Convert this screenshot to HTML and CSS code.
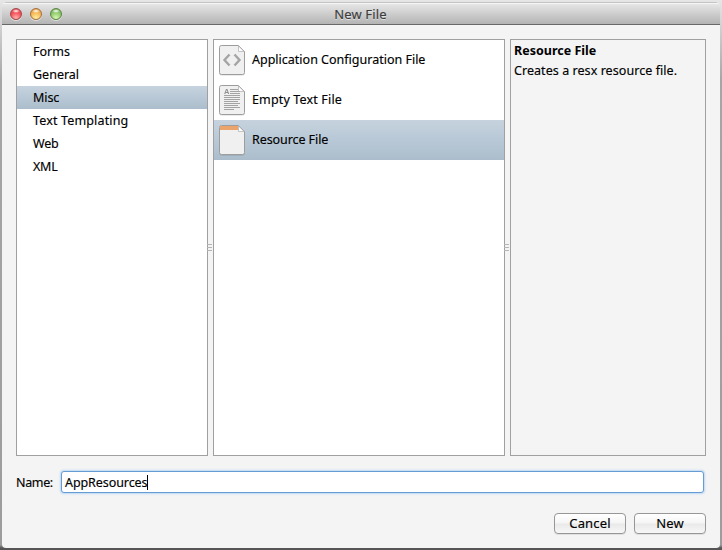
FILE: index.html
```
<!DOCTYPE html>
<html lang="en">
<head>
<meta charset="utf-8">
<title>New File</title>
<link rel="stylesheet" href="styles.css">
</head>
<body>
<div class="window">
  <header class="titlebar">
    <div class="lights"><i class="light red"></i><i class="light amber"></i><i class="light green"></i></div>
    <h1 class="title">New File</h1>
  </header>
  <main class="content">
    <div class="panels">
      <ul class="panel categories">
        <li>Forms</li>
        <li>General</li>
        <li class="selected snug">Misc</li>
        <li class="loose">Text Templating</li>
        <li class="tight">Web</li>
        <li class="tight">XML</li>
      </ul>
      <div class="splitter"><i class="grip"></i></div>
      <ul class="panel templates">
        <li>
          <svg class="icon" width="28" height="32" viewBox="0 0 28 32">
            <path class="page" d="M3.500 1.500H20.500L26.500 7.500V28.500Q26.500 30.500 24.500 30.500H3.500Q1.500 30.500 1.500 28.500V3.500Q1.500 1.500 3.500 1.500Z"/>
            <path class="fold" d="M20.500 2V7.500H26Z"/>
            <path class="code" d="M11.500 10.500L6.500 16L11.500 21.500M16.500 10.500L21.500 16L16.500 21.500"/>
          </svg>
          <span>Application Configuration File</span>
        </li>
        <li>
          <svg class="icon" width="28" height="32" viewBox="0 0 28 32">
            <path class="page" d="M3.500 1.500H20.500L26.500 7.500V28.500Q26.500 30.500 24.500 30.500H3.500Q1.500 30.500 1.500 28.500V3.500Q1.500 1.500 3.500 1.500Z"/>
            <path class="fold" d="M20.500 2V7.500H26Z"/>
            <text class="letter" x="6" y="10">A</text>
            <path class="lines" d="M12 5.500H20M12 7.500H22M12 9.500H22M6 11.500H22M6 13.500H22M6 15.500H22M6 17.500H20M6 19.500H22M6 21.500H20M6 23.500H22M6 25.500H16"/>
          </svg>
          <span class="loose">Empty Text File</span>
        </li>
        <li class="selected">
          <svg class="icon" width="28" height="32" viewBox="0 0 28 32">
            <path class="page" d="M3.500 1.500H20.500L26.500 7.500V28.500Q26.500 30.500 24.500 30.500H3.500Q1.500 30.500 1.500 28.500V3.500Q1.500 1.500 3.500 1.500Z"/>
            <path class="band" d="M2 2H20.500V6H2Z"/>
            <path class="fold" d="M20.500 2V7.500H26Z"/>
          </svg>
          <span class="snug">Resource File</span>
        </li>
      </ul>
      <div class="splitter"><i class="grip"></i></div>
      <section class="panel details">
        <h2>Resource File</h2>
        <p>Creates a resx resource file.</p>
      </section>
    </div>
    <div class="name-row">
      <span class="label">Name:</span>
      <div class="field"><span class="snug">AppResources</span><i class="caret"></i></div>
    </div>
    <div class="actions">
      <button>Cancel</button>
      <button>New</button>
    </div>
  </main>
</div>
</body>
</html>
```
FILE: styles.css
```
* { box-sizing: border-box; }
body {
  margin: 0;
  width: 722px;
  height: 550px;
  padding: 2px;
  overflow: hidden;
  background: linear-gradient(#e6e6e6 0, #d2d2d2 25px, #a6a6a6 80px, #9c9c9c 545px, #555 548px);
  font: 12.5px/23px "Noto Sans", "Open Sans", sans-serif;
  color: #000;
  -webkit-text-stroke: .15px;
}
ul, h1, h2, p { margin: 0; padding: 0; list-style: none; }
.window {
  height: 546px;
  border-radius: 5px 5px 4px 4px;
  background: #f4f4f4;
  overflow: hidden;
  display: flex;
  flex-direction: column;
}
.titlebar {
  position: relative;
  height: 23px;
  flex: none;
  border-top: 1px solid #c4c4c4;
  border-bottom: 1px solid #686868;
  box-shadow: inset 0 1px #f5f5f5;
  background: linear-gradient(#e8e8e8, #b4b4b4);
}
.lights { position: absolute; left: 8px; top: 5px; display: flex; gap: 8px; }
.light {
  width: 12px;
  height: 12px;
  border-radius: 50%;
  box-shadow: 0 1px 0 rgba(255,255,255,.55);
}
.red { border: 1px solid #a3474a; background: radial-gradient(ellipse 4px 2px at 50% 20%, #fff, transparent), radial-gradient(circle at 50% 90%, #ffb5ae, #f7585f 50%, #d93b43); }
.amber { border: 1px solid #a5723e; background: radial-gradient(ellipse 4px 2px at 50% 20%, #fff, transparent), radial-gradient(circle at 50% 90%, #fff0a4, #f8bc5c 50%, #da8d35); }
.green { border: 1px solid #5d8546; background: radial-gradient(ellipse 4px 2px at 50% 20%, #fff, transparent), radial-gradient(circle at 50% 90%, #dcf8b2, #95ce72 50%, #65a04a); }
.title {
  padding-right: 1px;
  text-align: center;
  font-size: 13px;
  font-weight: 400;
  letter-spacing: .15px;
  line-height: 22px;
  color: #3c3c3c;
  text-shadow: 0 1px rgba(255,255,255,.5);
}
.content { flex: 1; padding: 14px 14px 0; }
.panels { display: flex; height: 417px; width: 690px; }
.panel { border: 1px solid #a0a0a0; background: #fff; }
.categories { width: 192px; }
.categories li { height: 23px; padding-left: 16px; }
.tight { letter-spacing: -.25px; }
.snug { letter-spacing: -.08px; }
.loose { letter-spacing: .15px; }
.selected { background: linear-gradient(#c6d3df, #abbdcc); }
.splitter { width: 5px; display: flex; align-items: center; }
.grip {
  width: 5px;
  height: 7px;
  margin-left: -1px;
  border-top: 1px solid #b5b5b5;
  border-bottom: 1px solid #b5b5b5;
  background: linear-gradient(#b5b5b5, #b5b5b5) 0 2px / 5px 1px no-repeat;
}
.templates { width: 292px; }
.templates li { height: 40px; display: flex; align-items: center; gap: 6px; padding-left: 4px; }
.templates span { padding-bottom: 2px; }
.icon { flex: none; filter: drop-shadow(0 1px 0 rgba(0,0,0,.08)); }
.page { fill: #f0f0f0; stroke: #9d9d9d; }
.fold { fill: #fff; stroke: #b5b5b5; stroke-width: .8; }
.code { fill: none; stroke: #a5a5a5; stroke-width: 2.4; }
.lines { stroke: #a3a3a3; }
.letter { font: bold 7.5px "Liberation Sans", sans-serif; fill: #909090; stroke: none; }
.band { fill: #eba56c; }
.details { width: 196px; padding-left: 3px; background: #f4f4f4; }
.details h2 { font-size: 12.5px; font-weight: 700; line-height: 21px; -webkit-text-stroke: 0; }
.details p { line-height: 19px; letter-spacing: .06px; }
.name-row { display: flex; align-items: center; margin-top: 15px; height: 22px; }
.label { width: 45px; letter-spacing: -.35px; }
.field {
  display: flex;
  align-items: center;
  width: 643px;
  height: 22px;
  padding-left: 3px;
  border: 1px solid #659cd3;
  border-radius: 3px;
  background: #fff;
  box-shadow: 0 0 2px 1px #bdd8f3;
}
.caret { width: 1px; height: 15px; background: #000; }
.actions { display: flex; gap: 8px; width: 690px; justify-content: flex-end; margin-top: 20px; }
button {
  width: 72px;
  height: 21px;
  padding: 0 0 1px;
  border: 1px solid #979797;
  border-radius: 4px;
  background: linear-gradient(#fff, #f5f5f5 48%, #e9e9e9 52%, #f7f7f7);
  box-shadow: 0 1px rgba(0,0,0,.08);
  font: 13px/18px "Noto Sans", "Open Sans", sans-serif;
  letter-spacing: .15px;
  color: #000;
}
```
